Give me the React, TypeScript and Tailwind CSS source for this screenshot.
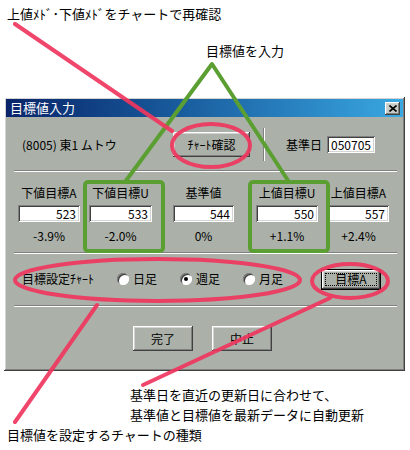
import React from "react";

const raised =
  "shadow-[inset_-1px_-1px_#404040,inset_1px_1px_#ffffff,inset_-2px_-2px_#808080,inset_2px_2px_#d4d4d4]";
const sunken =
  "shadow-[inset_1px_1px_#808080,inset_-1px_-1px_#ffffff,inset_2px_2px_#404040,inset_-2px_-2px_#d4d4d4]";

function Sep() {
  return <div className="ml-[8px] w-[383px] h-[2px] border-t border-t-[#808080] border-b border-b-white" />;
}

function Radio({ checked, label }: { checked?: boolean; label: string }) {
  return (
    <div className="w-[63px] flex items-center">
      <span className={`w-[12px] h-[12px] rounded-full bg-white flex items-center justify-center shadow-[inset_1px_1px_#808080,inset_-1px_-1px_#ffffff,inset_2px_2px_#404040]`}>
        {checked && <span className="w-[4px] h-[4px] rounded-full bg-black" />}
      </span>
      <span className="ml-[4px]">{label}</span>
    </div>
  );
}

function Col({ label, value, pct, w, ml }: { label: string; value: string; pct: string; w: string; ml: string }) {
  return (
    <div className={`${w} ${ml} flex flex-col items-center`}>
      <div className="h-[16px] leading-[16px] whitespace-nowrap">{label}</div>
      <div className={`mt-[4px] w-full h-[17px] bg-white ${sunken} text-right pr-[4px] leading-[17px]`}>{value}</div>
      <div className="mt-[6px] h-[16px] leading-[16px]">{pct}</div>
    </div>
  );
}

export default function App() {
  const jp = { fontFamily: '"Noto Sans CJK JP", "Noto Sans", sans-serif' };
  return (
    <div className="relative w-[410px] h-[450px] bg-white overflow-hidden text-black" style={jp}>
      <div className="pl-[7px] pt-[5px] h-[18px] leading-[18px] text-[13px] whitespace-nowrap">上値ﾒﾄﾞ･下値ﾒﾄﾞをチャートで再確認</div>
      <div className="pl-[206px] mt-[24px] h-[18px] leading-[18px] text-[13px] whitespace-nowrap">目標値を入力</div>

      {/* dialog */}
      <div className={`ml-[4px] mt-[37px] w-[401px] h-[274px] p-[2px] bg-[#abb0a9] text-[12px] ${raised}`}>
        <div className="h-[18px] bg-linear-to-r from-[#0a246a] to-[#3aa8e2] flex items-center justify-between pl-[4px] pr-[3px]">
          <span className="text-white text-[13px] leading-[18px]">目標値入力</span>
          <span className={`w-[15px] h-[13px] bg-[#c8ccc6] ${raised} flex items-center justify-center`}>
            <svg width="8" height="7" viewBox="0 0 8 7">
              <path d="M0.5 0.5 L7.5 6.5 M7.5 0.5 L0.5 6.5" stroke="#000" strokeWidth="1.6" />
            </svg>
          </span>
        </div>

        {/* row 1 */}
        <div className="mt-[10px] h-[35px] flex items-center">
          <span className="w-[167px] pl-[16px] whitespace-nowrap">(8005) 東1 ムトウ</span>
          <div className={`w-[77px] h-[25px] ${raised} flex items-center justify-center`}>ﾁｬｰﾄ確認</div>
          <div className="ml-[13px] w-[2px] h-[33px] border-l border-l-[#808080] border-r border-r-white" />
          <span className="ml-[21px] w-[34px] whitespace-nowrap">基準日</span>
          <div className={`ml-[7px] w-[48px] h-[17px] bg-white ${sunken} flex items-center justify-end pr-[4px]`}>050705</div>
        </div>
        <div className="mt-[8px]">
          <Sep />
        </div>

        {/* row 2 */}
        <div className="mt-[13px] flex">
          <Col label="下値目標A" value="523" pct="-3.9%" w="w-[62px]" ml="ml-[12px]" />
          <Col label="下値目標U" value="533" pct="-2.0%" w="w-[63px]" ml="ml-[9px]" />
          <Col label="基準値" value="544" pct="0%" w="w-[61px]" ml="ml-[21px]" />
          <Col label="上値目標U" value="550" pct="+1.1%" w="w-[62px]" ml="ml-[22px]" />
          <Col label="上値目標A" value="557" pct="+2.4%" w="w-[61px]" ml="ml-[10px]" />
        </div>
        <div className="mt-[8px]">
          <Sep />
        </div>

        {/* row 3 */}
        <div className="mt-[15px] h-[20px] flex items-center">
          <span className="w-[111px] pl-[16px] whitespace-nowrap">目標設定ﾁｬｰﾄ</span>
          <Radio label="日足" />
          <Radio label="週足" checked />
          <Radio label="月足" />
          <div className={`ml-[15px] w-[60px] h-[21px] border border-black bg-[#abb0a9] ${raised} flex items-center justify-center p-[3px]`}>
            <div className="w-full h-full border border-dotted border-black flex items-center justify-center leading-none">目標A</div>
          </div>
        </div>
        <div className="mt-[16px]">
          <Sep />
        </div>

        {/* row 4 */}
        <div className="mt-[19px] flex">
          <div className={`ml-[127px] w-[60px] h-[25px] ${raised} flex items-center justify-center`}>完了</div>
          <div className={`ml-[19px] w-[60px] h-[25px] ${raised} flex items-center justify-center`}>中止</div>
        </div>
      </div>

      <div className="pl-[130px] mt-[14px] text-[13px] leading-[20px] whitespace-nowrap">
        <div>基準日を直近の更新日に合わせて、</div>
        <div>基準値と目標値を最新データに自動更新</div>
      </div>
      <div className="pl-[7px] mt-[0px] text-[13px] leading-[20px] whitespace-nowrap">目標値を設定するチャートの種類</div>

      {/* annotations overlay */}
      <svg className="absolute left-0 top-0 pointer-events-none" width="410" height="450" viewBox="0 0 410 450">
        <g stroke="#5b9f33" strokeWidth="4" fill="none" strokeLinecap="round" strokeLinejoin="round">
          <path d="M125 182 L212 64 L289 182" />
          <rect x="85" y="182" width="78" height="69" rx="3" />
          <rect x="250" y="182" width="78" height="69" rx="3" />
        </g>
        <g stroke="#f0375f" strokeWidth="4" fill="none" strokeLinecap="round" opacity="0.92">
          <line x1="15" y1="24" x2="172" y2="131" />
          <ellipse cx="211" cy="145.5" rx="39" ry="21.5" />
          <ellipse cx="157.5" cy="280" rx="142.5" ry="21" />
          <ellipse cx="350" cy="281" rx="38" ry="17" />
          <line x1="97" y1="305" x2="15" y2="422" />
          <line x1="330" y1="298" x2="143" y2="385" />
        </g>
      </svg>
    </div>
  );
}
